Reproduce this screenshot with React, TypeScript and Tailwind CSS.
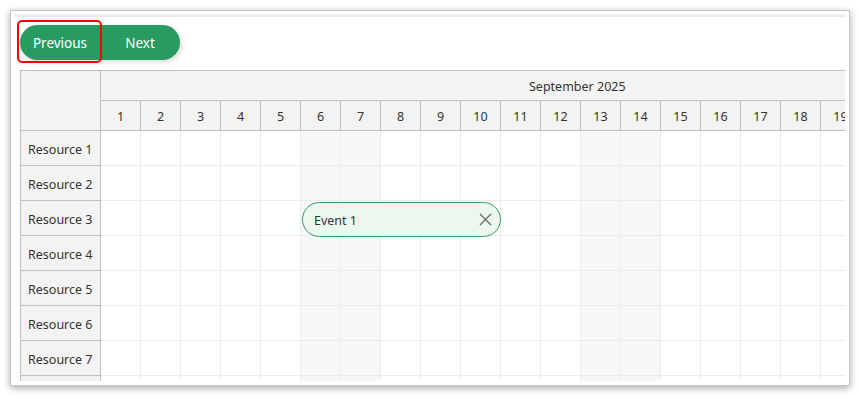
import React from "react";

const days = Array.from({ length: 30 }, (_, i) => i + 1);
const resources = Array.from({ length: 9 }, (_, i) => `Resource ${i + 1}`);

// Sept 1 2025 is a Monday
const isWeekend = (d: number) => {
  const dow = d % 7;
  return dow === 6 || dow === 0;
};

function CloseIcon() {
  return (
    <svg width="13" height="13" viewBox="0 0 13 13" className="block">
      <path d="M1 1 L12 12 M12 1 L1 12" stroke="#6b6b6b" strokeWidth="1.4" fill="none" />
    </svg>
  );
}

export default function App() {
  return (
    <div
      className="w-[860px] h-[396px] bg-white overflow-hidden pt-[10px] pl-[10px]"
      style={{ fontFamily: '"Noto Sans", "Open Sans", sans-serif' }}
    >
      <div className="w-[840px] h-[376px] bg-white border border-[#c6c6c6] shadow-[0_2px_7px_rgba(0,0,0,0.35)] overflow-hidden">
        <div className="mx-[3px] mt-[3px] h-[3px] bg-gradient-to-b from-[#f4f4f4] to-[#e9e9e9]" />
        <div className="pl-[9px] pt-[8px]">
          {/* toolbar */}
          <div className="relative flex h-[35px] w-[160px]">
            <div className="absolute -left-[3px] -top-[5px] w-[85px] h-[43px] border-[2.5px] border-[#ff0000] rounded-[5px] z-10" />
            <button className="w-[80px] h-[35px] pt-[2px] rounded-l-full bg-[#279b62] text-white text-[13.5px] shadow-[0_2px_5px_rgba(0,0,0,0.15)]">
              Previous
            </button>
            <button className="w-[80px] h-[35px] pt-[2px] rounded-r-full bg-[#279b62] text-white text-[13.5px] shadow-[2px_2px_5px_rgba(0,0,0,0.15)]">
              Next
            </button>
          </div>

          {/* scheduler */}
          <div className="mt-[10px] w-[825px] h-[311px] overflow-hidden border-l border-t border-[#c0c0c0] flex text-[12.5px] text-[#333]">
            <div className="w-[80px] shrink-0">
              <div className="h-[60px] bg-[#f3f3f3] border-r border-b border-[#c0c0c0]" />
              {resources.map((r) => (
                <div
                  key={r}
                  className="h-[35px] pt-[4px] bg-[#f3f3f3] border-r border-b border-[#c0c0c0] flex items-center pl-[7px]"
                >
                  {r}
                </div>
              ))}
            </div>
            <div className="w-[1200px] shrink-0">
              <div className="h-[30px] pt-[3px] bg-[#f3f3f3] border-b border-[#c0c0c0] flex items-center pl-[428px]">
                September 2025
              </div>
              <div className="h-[30px] flex bg-[#f3f3f3]">
                {days.map((d) => (
                  <div
                    key={d}
                    className="w-[40px] h-[30px] pt-[3px] shrink-0 border-r border-b border-[#c0c0c0] flex items-center justify-center"
                  >
                    {d}
                  </div>
                ))}
              </div>
              {resources.map((r, ri) => (
                <div key={r} className="relative h-[35px] flex">
                  {days.map((d) => (
                    <div
                      key={d}
                      className={`w-[40px] h-[35px] shrink-0 border-r border-b border-[#ececec] ${
                        isWeekend(d) ? "bg-[#f7f7f7]" : "bg-white"
                      }`}
                    />
                  ))}
                  {ri === 2 && (
                    <div className="absolute z-10 left-[201px] top-[1px] w-[199px] h-[35px] rounded-full border border-[#2f9f66] bg-[#ecf7ee] flex items-center justify-between pl-[11px] pr-[8px]">
                      <span className="pt-[3px]">Event 1</span>
                      <CloseIcon />
                    </div>
                  )}
                </div>
              ))}
            </div>
          </div>
        </div>
      </div>
    </div>
  );
}
